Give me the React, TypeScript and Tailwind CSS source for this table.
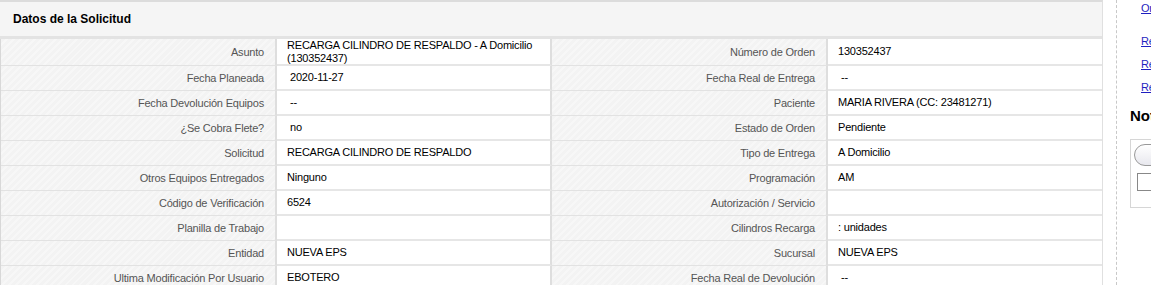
import React from "react";

interface Campo {
	label: string;
	valor: string;
	sangria?: boolean;
}

const filas: [Campo, Campo][] = [
	[
		{ label: "Asunto", valor: "RECARGA CILINDRO DE RESPALDO - A Domicilio (130352437)" },
		{ label: "Número de Orden", valor: "130352437" }
	],
	[
		{ label: "Fecha Planeada", valor: "2020-11-27", sangria: true },
		{ label: "Fecha Real de Entrega", valor: "--", sangria: true }
	],
	[
		{ label: "Fecha Devolución Equipos", valor: "--", sangria: true },
		{ label: "Paciente", valor: "MARIA RIVERA (CC: 23481271)" }
	],
	[
		{ label: "¿Se Cobra Flete?", valor: "no", sangria: true },
		{ label: "Estado de Orden", valor: "Pendiente" }
	],
	[
		{ label: "Solicitud", valor: "RECARGA CILINDRO DE RESPALDO" },
		{ label: "Tipo de Entrega", valor: "A Domicilio" }
	],
	[
		{ label: "Otros Equipos Entregados", valor: "Ninguno" },
		{ label: "Programación", valor: "AM" }
	],
	[
		{ label: "Código de Verificación", valor: "6524" },
		{ label: "Autorización / Servicio", valor: "" }
	],
	[
		{ label: "Planilla de Trabajo", valor: "" },
		{ label: "Cilindros Recarga", valor: ": unidades" }
	],
	[
		{ label: "Entidad", valor: "NUEVA EPS" },
		{ label: "Sucursal", valor: "NUEVA EPS" }
	],
	[
		{ label: "Ultima Modificación Por Usuario", valor: "EBOTERO" },
		{ label: "Fecha Real de Devolución", valor: "--", sangria: true }
	]
];

const rayado =
	"bg-[repeating-linear-gradient(135deg,#f3f3f3_0px,#f3f3f3_3px,#f7f7f7_3px,#f7f7f7_5px)]";

function Celdas({ campo, alto, ultima }: { campo: Campo; alto: string; ultima?: boolean }) {
	return (
		<>
			<div
				className={`${rayado} ${alto} w-[276px] shrink-0 flex items-center justify-end pr-[11px] text-[#555] border-b border-[#e2e2e2] border-r-2 border-r-[#dedede]`}
			>
				{campo.label}
			</div>
			<div
				className={`${alto} ${ultima ? "w-[274px]" : "w-[275px]"} shrink-0 bg-white flex items-center text-black leading-[13px] border-b-2 border-[#e6e6e6] ${
					campo.sangria ? "pl-[13px]" : "pl-[10px]"
				} ${ultima ? "" : "border-r-2 border-r-[#dedede]"}`}
			>
				<span className="pr-1">{campo.valor}</span>
			</div>
		</>
	);
}

export default function App() {
	return (
		<div className="flex w-[1151px] h-[285px] overflow-hidden bg-white font-['Liberation_Sans',Arial,sans-serif] text-[11px] tracking-[-0.2px]">
			{/* Panel principal */}
			<div className="w-[1103px] shrink-0 border-t-2 border-[#dcdcdc] border-r border-r-[#e0e0e0]">
				<div className="h-[37px] bg-[#f5f5f5] border-b-[3px] border-[#e3e3e3] flex items-center pl-[13px]">
					<h2 className="text-[12px] font-bold text-black tracking-normal">Datos de la Solicitud</h2>
				</div>
				<div className="border-l border-[#d8d8d8]">
					{filas.map((fila, i) => {
						const alto = i === 0 ? "h-[27px]" : "h-[25px]";
						return (
							<div key={i} className="flex">
								<Celdas campo={fila[0]} alto={alto} />
								<Celdas campo={fila[1]} alto={alto} ultima />
							</div>
						);
					})}
				</div>
			</div>

			{/* Barra lateral */}
			<div className="w-[13px] shrink-0" />
			<div className="w-0 border-l border-dashed border-[#c8c8c8] h-full" />
			<div className="flex-1 pl-[24px] pt-[1px]">
				<div className="flex flex-col text-[11px] text-[#1f1fc0]">
					<a className="underline h-[14px] leading-[14px]">Or</a>
					<a className="underline mt-[19px] leading-[14px]">Re</a>
					<a className="underline mt-[9px] leading-[14px]">Re</a>
					<a className="underline mt-[9px] leading-[14px]">Re</a>
				</div>
				<h3 className="mt-[13px] -ml-[11px] text-[15px] font-bold text-black leading-[18px] tracking-normal">
					Not
				</h3>
				<div className="mt-[14px] -ml-[11px] w-[60px] h-[69px] border border-[#d6d6d6] border-r-0 pt-[4px] pl-[3px]">
					<div className="h-[22px] w-[60px] rounded-full border border-[#999] bg-[linear-gradient(#ffffff,#e8e8ee)]" />
					<div className="mt-[7px] ml-[3px] h-[18px] w-[60px] border border-[#888] bg-white" />
				</div>
			</div>
		</div>
	);
}
